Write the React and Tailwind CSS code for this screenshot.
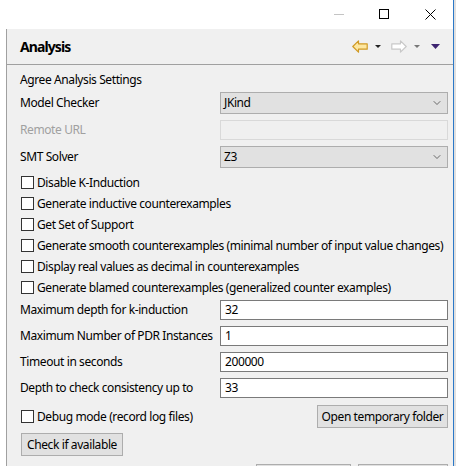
import { ChevronDown } from 'lucide-react';

const font = { fontFamily: '"Noto Sans", "Open Sans", sans-serif' };

function Combo({ value }) {
  return (
    <div className="flex h-[22px] items-center justify-between border border-[#adadad] bg-[#e1e1e1] pl-[3px] pr-[4px] text-black">
      <span>{value}</span>
      <ChevronDown size={12} strokeWidth={1.4} className="text-[#333]" />
    </div>
  );
}

function Field({ value }) {
  return (
    <div className="flex h-[20px] items-center border border-[#7a7a7a] bg-white pl-[4px] text-black">
      {value}
    </div>
  );
}

function Check({ label }) {
  return (
    <div className="flex h-[21px] items-center whitespace-nowrap">
      <span className="ml-[1px] h-[13px] w-[13px] shrink-0 border border-[#333] bg-white" />
      <span className="ml-[3px] text-black">{label}</span>
    </div>
  );
}

function Btn({ children, className = '' }) {
  return (
    <button
      type="button"
      className={`flex h-[23px] shrink-0 items-center justify-center whitespace-nowrap border border-[#adadad] bg-[#e1e1e1] text-black ${className}`}
    >
      {children}
    </button>
  );
}

function Tri({ color, w = 6, h = 3 }) {
  return (
    <svg width={w} height={h} viewBox={`0 0 ${w} ${h}`}>
      <polygon points={`0,0 ${w},0 ${w / 2},${h}`} fill={color} />
    </svg>
  );
}

function Arrow({ dir, fill, stroke }) {
  return (
    <svg width="16" height="13" viewBox="0 0 16 13" style={dir === 'right' ? { transform: 'scaleX(-1)' } : undefined}>
      <polygon
        points="0.8,6.5 6.5,0.8 6.5,3.8 15.2,3.8 15.2,9.2 6.5,9.2 6.5,12.2"
        fill={fill}
        stroke={stroke}
        strokeWidth="1.2"
        strokeLinejoin="round"
      />
    </svg>
  );
}

const checks = [
  'Disable K-Induction',
  'Generate inductive counterexamples',
  'Get Set of Support',
  'Generate smooth counterexamples (minimal number of input value changes)',
  'Display real values as decimal in counterexamples',
  'Generate blamed counterexamples (generalized counter examples)',
];

const fields = [
  ['Maximum depth for k-induction', '32'],
  ['Maximum Number of PDR Instances', '1'],
  ['Timeout in seconds', '200000'],
  ['Depth to check consistency up to', '33'],
];

export default function App() {
  return (
    <div className="flex h-[466px] w-[456px] overflow-hidden bg-white" style={font}>
      <div className="flex w-[453px] flex-col">
        {/* window controls */}
        <div className="relative h-[29px] shrink-0 bg-white">
          <span className="absolute left-[334px] top-[14px] h-px w-[10px] bg-[#c4c4c4]" />
          <span className="absolute left-[379px] top-[9px] h-[10px] w-[10px] border border-black" />
          <svg className="absolute left-[425px] top-[9px]" width="11" height="11" viewBox="0 0 11 11">
            <path d="M0.5 0.5 L10.5 10.5 M10.5 0.5 L0.5 10.5" stroke="#000" strokeWidth="1" />
          </svg>
        </div>

        <div className="flex flex-1">
          <div className="w-[6px] shrink-0 bg-white" />
          <div className="flex min-w-0 flex-1 flex-col border-l border-[#a0a0a0] bg-[#f0f0f0]">
            {/* view header */}
            <div className="flex h-[36px] shrink-0 items-center justify-between border-b border-[#a0a0a0] pl-[13px] pr-[13px]">
              <span className="text-[14px] font-bold tracking-[-0.9px] text-black">Analysis</span>
              <div className="flex items-center">
                <Arrow dir="left" fill="#fde7a0" stroke="#d09a25" />
                <span className="ml-[7px]"><Tri color="#222" /></span>
                <span className="ml-[10px]"><Arrow dir="right" fill="#fff" stroke="#c8c8c8" /></span>
                <span className="ml-[7px]"><Tri color="#777" /></span>
                <span className="ml-[11px]"><Tri color="#3d2470" w={9} h={5} /></span>
              </div>
            </div>

            {/* content */}
            <div className="flex flex-col whitespace-nowrap pl-[13px] pr-[5px] pt-[7px] text-[12px] tracking-[-0.4px] text-black">
              <div className="flex h-[16px] items-center">Agree Analysis Settings</div>

              <div className="mt-[4px] grid grid-cols-[200px_1fr] items-center">
                <span>Model Checker</span>
                <Combo value="JKind" />
              </div>
              <div className="mt-[6px] grid grid-cols-[200px_1fr] items-center">
                <span className="text-[#a0a0a0]">Remote URL</span>
                <div className="h-[20px] border border-[#d9d9d9] bg-[#f0f0f0]" />
              </div>
              <div className="mt-[6px] grid grid-cols-[200px_1fr] items-center">
                <span>SMT Solver</span>
                <Combo value="Z3" />
              </div>

              <div className="mt-[4px] flex flex-col">
                {checks.map((c) => (
                  <Check key={c} label={c} />
                ))}
              </div>

              <div className="mt-[2px] flex flex-col gap-[6px]">
                {fields.map(([l, v]) => (
                  <div key={l} className="grid grid-cols-[200px_1fr] items-center">
                    <span>{l}</span>
                    <Field value={v} />
                  </div>
                ))}
              </div>

              <div className="mt-[7px] flex items-center justify-between">
                <Check label="Debug mode (record log files)" />
                <Btn className="w-[131px]">Open temporary folder</Btn>
              </div>

              <div className="mt-[5px] flex">
                <Btn className="ml-[1px] w-[102px]">Check if available</Btn>
              </div>

              <div className="mt-[8px] flex justify-end gap-[7px]">
                <Btn className="w-[95px]" />
                <Btn className="w-[90px]" />
              </div>
            </div>
          </div>
        </div>
      </div>
      <div className="w-px shrink-0 bg-[#2b78c8]" />
      <div className="w-[2px] shrink-0 bg-[#e0e0e0]" />
    </div>
  );
}
